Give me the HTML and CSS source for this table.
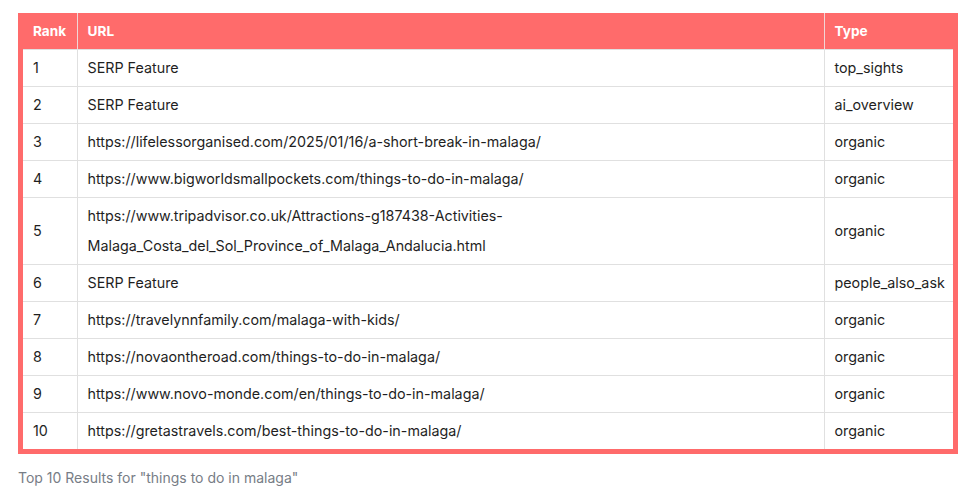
FILE: index.html
```html
<!DOCTYPE html>
<html>
<head>
<meta charset="utf-8">
<link rel="stylesheet" href="styles.css">
</head>
<body>
<div class="page">
  <div class="frame">
    <table class="results">
      <thead>
        <tr><th class="c-rank">Rank</th><th class="c-url">URL</th><th class="c-type">Type</th></tr>
      </thead>
      <tbody>
        <tr><td>1</td><td>SERP Feature</td><td>top_sights</td></tr>
        <tr><td>2</td><td>SERP Feature</td><td>ai_overview</td></tr>
        <tr><td>3</td><td>https://lifelessorganised.com/2025/01/16/a-short-break-in-malaga/</td><td>organic</td></tr>
        <tr><td>4</td><td>https://www.bigworldsmallpockets.com/things-to-do-in-malaga/</td><td>organic</td></tr>
        <tr><td>5</td><td>https://www.tripadvisor.co.uk/Attractions-g187438-Activities-<br>Malaga_Costa_del_Sol_Province_of_Malaga_Andalucia.html</td><td>organic</td></tr>
        <tr><td>6</td><td>SERP Feature</td><td>people_also_ask</td></tr>
        <tr><td>7</td><td>https://travelynnfamily.com/malaga-with-kids/</td><td>organic</td></tr>
        <tr><td>8</td><td>https://novaontheroad.com/things-to-do-in-malaga/</td><td>organic</td></tr>
        <tr><td>9</td><td>https://www.novo-monde.com/en/things-to-do-in-malaga/</td><td>organic</td></tr>
        <tr><td>10</td><td>https://gretastravels.com/best-things-to-do-in-malaga/</td><td>organic</td></tr>
      </tbody>
    </table>
  </div>
  <p class="caption">Top 10 Results for "things to do in malaga"</p>
</div>
</body>
</html>
```
FILE: styles.css
```css
html, body {
  margin: 0;
  padding: 0;
  background: #ffffff;
}
.page {
  padding: 13px 22px 0 18px;
  font-family: Inter, "Noto Sans", sans-serif;
}
.frame {
  width: 930px;
  background: #ff6b6b;
  padding: 0 5px 5px 5px;
}
.results {
  width: 100%;
  border-collapse: collapse;
  table-layout: fixed;
  background: #ffffff;
  color: #1f1f1f;
  font-size: 14.3px;
}
.results th {
  background: #ff6b6b;
  color: #ffffff;
  font-weight: 700;
  font-size: 13.6px;
  text-align: left;
  height: 36px;
  padding: 0 10px;
  box-sizing: border-box;
  border-bottom: 1px solid #e0e0e0;
  border-left: 1px solid #f1d6d6;
  vertical-align: middle;
}
.results th:first-child { border-left: none; }
.c-rank { width: 54px; }
.c-type { width: 129px; }
.results td {
  padding: 3px 10px;
  line-height: 30px;
  border-top: 1px solid #e0e0e0;
  border-left: 1px solid #e0e0e0;
  vertical-align: middle;
}
.results tbody tr:first-child td { border-top: none; }
.results td:first-child { border-left: none; }
.caption {
  margin: 15px 0 0 0;
  font-size: 14px;
  color: #777d86;
}
```
